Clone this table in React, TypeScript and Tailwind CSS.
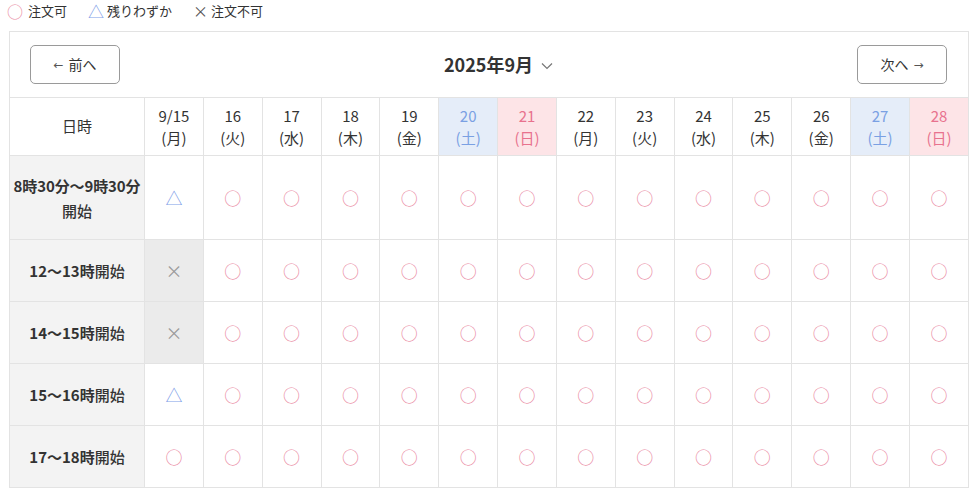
import React from "react"

type Mark = "o" | "t" | "x"

const days = [
  { d: "9/15", w: "月", k: "" },
  { d: "16", w: "火", k: "" },
  { d: "17", w: "水", k: "" },
  { d: "18", w: "木", k: "" },
  { d: "19", w: "金", k: "" },
  { d: "20", w: "土", k: "sat" },
  { d: "21", w: "日", k: "sun" },
  { d: "22", w: "月", k: "" },
  { d: "23", w: "火", k: "" },
  { d: "24", w: "水", k: "" },
  { d: "25", w: "木", k: "" },
  { d: "26", w: "金", k: "" },
  { d: "27", w: "土", k: "sat" },
  { d: "28", w: "日", k: "sun" },
]

const slots: { label: string; tall?: boolean; first: Mark }[] = [
  { label: "8時30分〜9時30分", tall: true, first: "t" },
  { label: "12〜13時", first: "x" },
  { label: "14〜15時", first: "x" },
  { label: "15〜16時", first: "t" },
  { label: "17〜18時", first: "o" },
]

function MarkGlyph({ m }: { m: Mark }) {
  if (m === "t") return <span className="text-[#7f9fe8] text-[17px]">△</span>
  if (m === "x") return <span className="text-[#9a9a9a] text-[17px]">×</span>
  return <span className="text-[#ea8aa3] text-[17px]">○</span>
}

export default function App() {
  return (
    <div className="w-[979px] h-[495px] bg-white text-[#333] font-['Noto_Sans_CJK_JP','Noto_Sans',sans-serif] overflow-hidden">
      <div className="h-[31px] flex items-start pt-[1px] pl-[7px] text-[13px] leading-[20px] gap-[21px]">
        <div className="flex items-center gap-[5px]">
          <span className="text-[#ea8aa3] text-[16px]">○</span>
          <span>注文可</span>
        </div>
        <div className="flex items-center gap-[3px]">
          <span className="text-[#7f9fe8] text-[16px]">△</span>
          <span>残りわずか</span>
        </div>
        <div className="flex items-center gap-[3px]">
          <span className="text-[#555] text-[15px]">×</span>
          <span>注文不可</span>
        </div>
      </div>

      <div className="ml-[9px] w-[960px]">
        <div className="h-[66px] border border-b-0 border-[#e3e3e3] flex items-center justify-between pl-[20px] pr-[21px]">
          <button className="w-[90px] h-[39px] border border-[#9a9a9a] rounded-[5px] text-[14px] text-[#333] bg-white flex items-center justify-center gap-[5px]">
            <span className="font-['DejaVu_Sans',sans-serif] text-[12px] text-[#555]">←</span>
            <span>前へ</span>
          </button>
          <div className="flex items-center gap-[8px] text-[18px] font-bold text-[#333] ml-[20px]">
            <span>2025年9月</span>
            <svg width="12" height="8" viewBox="0 0 12 8" className="mt-[3px]">
              <path d="M1 1.5 L6 6.5 L11 1.5" fill="none" stroke="#777" strokeWidth="1.2" />
            </svg>
          </div>
          <button className="w-[90px] h-[39px] border border-[#9a9a9a] rounded-[5px] text-[14px] text-[#333] bg-white flex items-center justify-center gap-[5px]">
            <span>次へ</span>
            <span className="font-['DejaVu_Sans',sans-serif] text-[12px] text-[#555]">→</span>
          </button>
        </div>

        <table className="w-full table-fixed border-collapse text-[15px]">
          <colgroup>
            <col className="w-[135px]" />
            {days.map((d) => (
              <col key={d.d} />
            ))}
          </colgroup>
          <thead>
            <tr className="h-[58px]">
              <th className="border border-[#e3e3e3] font-normal bg-white">日時</th>
              {days.map((d) => (
                <th
                  key={d.d}
                  className={
                    "border border-[#e3e3e3] font-normal leading-[22px] " +
                    (d.k === "sat"
                      ? "bg-[#e5edf9] text-[#7aa0e3]"
                      : d.k === "sun"
                      ? "bg-[#fde4e7] text-[#e8728e]"
                      : "bg-white text-[#333]")
                  }
                >
                  <div>{d.d}</div>
                  <div>({d.w})</div>
                </th>
              ))}
            </tr>
          </thead>
          <tbody>
            {slots.map((s) => (
              <tr key={s.label} className={s.tall ? "h-[84px]" : "h-[62px]"}>
                <td className="border border-[#e3e3e3] bg-[#f3f3f3] text-center leading-[25px] px-0">
                  {s.tall ? (
                    <>
                      <div className="font-bold text-[15px] tracking-[-0.1px]">{s.label}</div>
                      <div className="text-[15px] font-medium">開始</div>
                    </>
                  ) : (
                    <span className="font-bold text-[15px]">
                      {s.label}
                      <span className="font-medium">開始</span>
                    </span>
                  )}
                </td>
                {days.map((d, i) => {
                  const m: Mark = i === 0 ? s.first : "o"
                  return (
                    <td
                      key={d.d}
                      className={
                        "border border-[#e3e3e3] text-center " +
                        (m === "x" ? "bg-[#ebebeb]" : "bg-white")
                      }
                    >
                      <MarkGlyph m={m} />
                    </td>
                  )
                })}
              </tr>
            ))}
          </tbody>
        </table>
      </div>
    </div>
  )
}
